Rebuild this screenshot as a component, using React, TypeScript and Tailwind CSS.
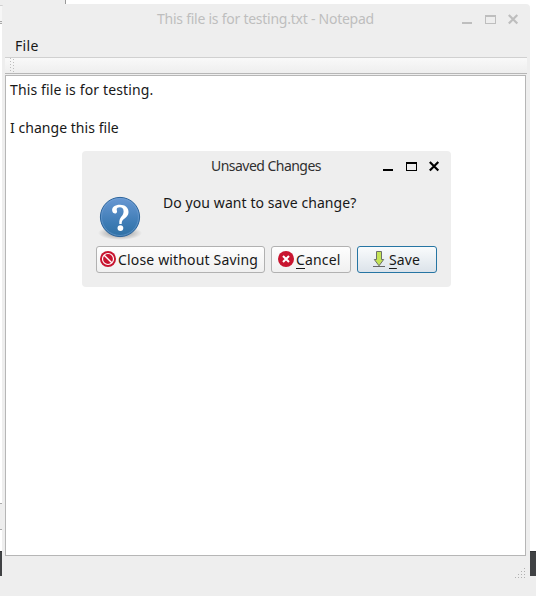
import React from "react";

function WindowControls({ color }: { color: string }) {
  return (
    <svg width="58" height="14" viewBox="0 0 58 14" fill="none" className="block">
      <path d="M0 10h10v2H0z" fill={color} />
      <path d="M23 3h11v9H23zM24 5v6h9V5z" fill={color} fillRule="evenodd" />
      <path d="M46.8 3l8.5 8.5M55.3 3L46.8 11.5" stroke={color} strokeWidth="2.2" />
    </svg>
  );
}

function QuestionIcon() {
  return (
    <svg width="48" height="48" viewBox="0 0 48 48" className="block">
      <defs>
        <linearGradient id="blue" x1="0" y1="0" x2="0" y2="1">
          <stop offset="0" stopColor="#6998d3" />
          <stop offset="0.65" stopColor="#3e7cb5" />
          <stop offset="1" stopColor="#2e70a4" />
        </linearGradient>
        <radialGradient id="shade">
          <stop offset="0.5" stopColor="#000" stopOpacity="0.22" />
          <stop offset="1" stopColor="#000" stopOpacity="0" />
        </radialGradient>
      </defs>
      <ellipse cx="24" cy="40" rx="22" ry="7" fill="url(#shade)" />
      <circle cx="24" cy="24" r="19.6" fill="url(#blue)" stroke="#2b649c" />
      <circle cx="24" cy="24" r="18.5" fill="none" stroke="#78a6d8" strokeOpacity="0.5" />
      <path
        d="M16.4 18.6C15 14.3 19.1 11.8 24 11.8c5.1 0 8.5 2.8 8.5 7.1 0 3.6-2.4 5.3-4.6 7.2-1.6 1.4-2.2 2.6-2.2 4.8h-2.4c-.2-3.3.5-5.2 1.9-7.1 1.3-1.8 2.4-3 2.4-5.4 0-2.6-1.5-4.1-3.8-4.1-1.9 0-3.1.8-3.1 2.1 0 .9.4 1.2.4 2.1 0 2.4-3.6 3-4.7.1z"
        fill="#fff"
      />
      <circle cx="24.4" cy="35.1" r="2.9" fill="#fff" />
    </svg>
  );
}

function DiscardIcon() {
  return (
    <svg width="16" height="16" viewBox="0 0 16 16" className="-mt-px block shrink-0">
      <circle cx="8" cy="8" r="8" fill="#c8142f" />
      <circle cx="8" cy="8" r="5.5" fill="none" stroke="#fff" strokeWidth="1.2" />
      <path d="M4.2 4.2l7.6 7.6" stroke="#fff" strokeWidth="1.4" />
    </svg>
  );
}

function CancelIcon() {
  return (
    <svg width="16" height="16" viewBox="0 0 16 16" className="-mt-px block shrink-0">
      <circle cx="8" cy="8" r="8" fill="#c8142f" />
      <path d="M5 5l6 6M11 5l-6 6" stroke="#fff" strokeWidth="2.1" />
    </svg>
  );
}

function SaveIcon() {
  return (
    <svg width="16" height="16" viewBox="0 0 16 16" className="-mt-px block shrink-0">
      <path d="M2 15.5h12" stroke="#666" />
      <path d="M5.5.5h5v8h2.2L8 14.8 3.3 8.5h2.2z" fill="#c4e456" stroke="#6c7068" strokeLinejoin="round" />
    </svg>
  );
}

const handleDots = [0, 3, 6, 9, 12];
const gripDots = [
  [10, 1], [7, 4], [10, 4], [4, 7], [7, 7], [10, 7], [1, 10], [4, 10], [7, 10], [10, 10],
];

function NotepadWindow() {
  return (
    <section className="absolute left-[2px] top-[4px] flex h-[592px] w-[528px] flex-col rounded-t-[4px] bg-[#eeeeee] px-[3px]">
      <header className="flex h-[29px] shrink-0 items-start pl-[152px] text-[#bebebe]">
        <h1 className="mt-[5px] h-5 w-[218px] whitespace-nowrap text-[14px] leading-5 tracking-[-0.25px]">
          This file is for testing.txt - Notepad
        </h1>
        <div className="ml-[87px] mt-[8px]"><WindowControls color="#bebebe" /></div>
      </header>
      <nav className="flex h-6 shrink-0 pl-[10px] pt-[3px] text-[14px] leading-5 tracking-[0.3px]">File</nav>
      <div className="h-[17px] shrink-0 border-b border-t border-b-[#b6b6b6] border-t-[#d0d0d0] bg-gradient-to-b from-[#f9f9f9] to-[#eeeeee] pl-[5px]">
        <svg width="5" height="15" className="block" fill="#bdbdbd">
          {handleDots.map((y) => (
            <g key={y}>
              <rect x="0" y={y} width="1" height="1" />
              <rect x="3" y={y + 1} width="1" height="1" />
            </g>
          ))}
        </svg>
      </div>
      <main className="mt-px h-[481px] w-[521px] shrink-0 border border-[#b6b6b6] bg-white pl-[4px] pt-[4px] text-[14px] leading-[19px]">
        <p className="whitespace-nowrap tracking-[0.14px]">This file is for testing.</p>
        <p className="mt-[19px] whitespace-nowrap tracking-[0.04px]">I change this file</p>
      </main>
      <footer className="flex justify-end pr-[1px] pt-[11px]">
        <svg width="12" height="12" fill="#b0b0b0">
          {gripDots.map(([x, y]) => <rect key={`${x}-${y}`} x={x} y={y} width="1" height="1" />)}
        </svg>
      </footer>
    </section>
  );
}

function UnsavedDialog() {
  return (
    <section className="absolute left-[82px] top-[151px] flex h-[136px] w-[369px] flex-col rounded-[4px] bg-[#eeeeee] pl-[14px]">
      <header className="flex h-[29px] shrink-0 pl-[115px]">
        <h2 className="mt-[5px] w-[111px] whitespace-nowrap text-[14px] leading-5 tracking-[-0.53px] text-[#303030]">Unsaved Changes</h2>
        <div className="ml-[61px] mt-[8px]"><WindowControls color="#000" /></div>
      </header>
      <div className="flex h-[66px] shrink-0">
        <div className="mt-[13px]"><QuestionIcon /></div>
        <p className="ml-[19px] mt-[13px] whitespace-nowrap text-[14px] leading-5 tracking-[0.08px]">Do you want to save change?</p>
      </div>
      <div className="flex gap-[6px]">
        <button className="flex h-[27px] w-[169px] items-center gap-[2px] rounded-[3px] border border-[#b1b1b1] bg-gradient-to-b from-[#fefefe] to-[#f0f0f0] pl-[3px]">
          <DiscardIcon /><span className="whitespace-nowrap text-[14px] leading-5 tracking-[0.16px]">Close without Saving</span>
        </button>
        <button className="flex h-[27px] w-[80px] items-center gap-[2px] rounded-[3px] border border-[#b1b1b1] bg-gradient-to-b from-[#fefefe] to-[#f0f0f0] pl-[6px]">
          <CancelIcon /><span className="text-[14px] leading-5 tracking-[0.15px]"><u className="underline-offset-[3px]">C</u>ancel</span>
        </button>
        <button className="flex h-[27px] w-[80px] items-center gap-[2px] rounded-[3px] border border-[#2675a3] bg-gradient-to-b from-[#f9fbfc] to-[#dce3ea] pl-[13px]">
          <SaveIcon /><span className="text-[14px] leading-5 tracking-[0.15px]"><u className="underline-offset-[3px]">S</u>ave</span>
        </button>
      </div>
    </section>
  );
}

export default function App() {
  return (
    <div className="relative h-[596px] w-[536px] overflow-hidden bg-white font-['Noto_Sans','Open_Sans',sans-serif] text-[#181818]">
      <div className="flex h-full flex-col">
        <div className="h-[5px] w-[66px] border-r border-[#999] bg-[#eeeeee]" />
        <div className="h-[17px] w-[3px] border-y border-b-[#a8a8a8] border-t-[#d0d0d0] bg-[#f6f6f6]" />
        <div className="h-[2px] w-[3px] border-b border-[#a8a8a8] bg-[#eeeeee]" />
        <div className="h-[479px]" />
        <div className="h-[27px] w-[3px] border-y border-[#aaa] bg-[#eeeeee]" />
        <div className="h-[21px]" />
        <div className="h-[25px] border-t border-[#303234] bg-[#404244]" />
        <div className="h-[20px] bg-[#eeeeee]" />
      </div>
      <NotepadWindow />
      <UnsavedDialog />
    </div>
  );
}
